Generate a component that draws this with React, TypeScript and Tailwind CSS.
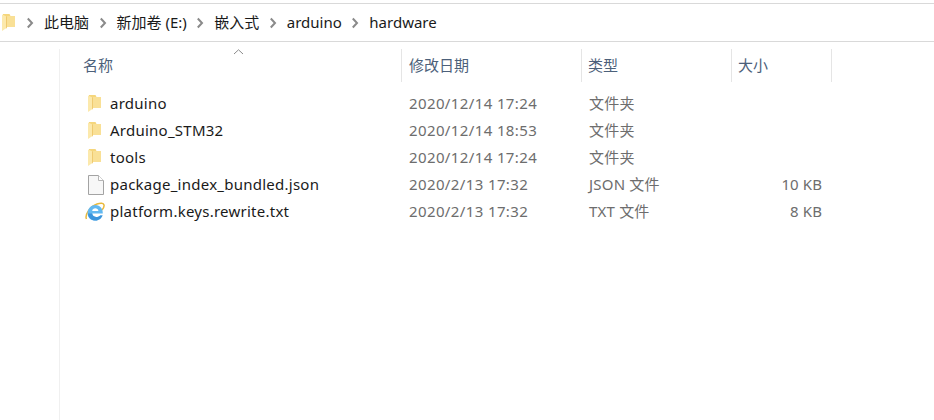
import React from "react";

const font = { fontFamily: '"Noto Sans", "Noto Sans CJK SC", sans-serif' };

const crumbs = ["此电脑", "新加卷 (E:)", "嵌入式", "arduino", "hardware"];

type Row = { name: string; date: string; type: string; size?: string; icon: "folder" | "file" | "ie" };

const rows: Row[] = [
  { name: "arduino", date: "2020/12/14 17:24", type: "文件夹", icon: "folder" },
  { name: "Arduino_STM32", date: "2020/12/14 18:53", type: "文件夹", icon: "folder" },
  { name: "tools", date: "2020/12/14 17:24", type: "文件夹", icon: "folder" },
  { name: "package_index_bundled.json", date: "2020/2/13 17:32", type: "JSON 文件", size: "10 KB", icon: "file" },
  { name: "platform.keys.rewrite.txt", date: "2020/2/13 17:32", type: "TXT 文件", size: "8 KB", icon: "ie" },
];

function FolderIcon({ className }: { className?: string }) {
  return (
    <svg viewBox="0 0 13 17" className={className}>
      <path d="M1 0 H7.5 L8.5 2 H13 V13 H1 Z" fill="#f5d67c" />
      <path d="M4.5 2 H13 V13 H4.5 Z" fill="#f9e096" />
      <path d="M0 0.5 L4.5 2.5 V14 L0 17 Z" fill="#fce9ac" />
      <path d="M4 2.3 L4.8 2.5 V14 L4 14.5 Z" fill="#ecc566" />
    </svg>
  );
}

function FileIcon() {
  return (
    <svg viewBox="0 0 16 20" className="h-5 w-4">
      <path d="M0.5 0.5 H10.5 L15.5 5.5 V19.5 H0.5 Z" fill="#f7f7f7" stroke="#a3a3a3" />
      <path d="M10.5 0.5 V5.5 H15.5" fill="#ffffff" stroke="#b5b5b5" />
    </svg>
  );
}

function IeIcon() {
  return (
    <svg viewBox="0 0 20 20" className="h-5 w-5">
      <path
        d="M1.5 17 C-0.5 13 5 4.5 12 2 C15.5 0.8 18.5 0.8 19 3 C19.4 4.6 18.4 6.3 17 8"
        fill="none"
        stroke="#e9b93c"
        strokeWidth="1.5"
      />
      <path
        d="M2.6 11 C2.6 6.4 6.2 3 10.6 3 C15 3 18 6.6 17.8 11.6 H7.2 C7.4 15.2 12.2 16 15.2 13.4 H17.6 C15.8 17.4 12.4 18.6 10 18.6 C5.8 18.6 2.6 15.6 2.6 11 Z M7.2 9 H13.4 C13.2 5.4 7.4 5.4 7.2 9 Z"
        fill="#62b8f0"
        fillRule="evenodd"
      />
      <path d="M3.4 14 C5 17.4 8 18.6 10 18.6 C12.4 18.6 15.8 17.4 17.6 13.4 H15.2 C12.4 16 7.4 15.4 7.2 11.6 H3 Z" fill="#3a94dc" />
    </svg>
  );
}

function Chevron() {
  return (
    <svg viewBox="0 0 8 12" className="h-3 w-2 shrink-0">
      <path d="M1.8 1.5 L6 6 L1.8 10.5" fill="none" stroke="#8a8a8a" strokeWidth="2" />
    </svg>
  );
}

export default function App() {
  return (
    <div className="h-[420px] w-[934px] overflow-hidden bg-white text-[15px]" style={font}>
      {/* Address bar */}
      <div className="mt-[3px] flex h-[39px] items-center border-y border-[#d9d9d9] text-[#1a1a1a]">
        <FolderIcon className="ml-[2px] h-[17px] w-[13px]" />
        <div className="ml-[11px] flex items-center">
          {crumbs.map((crumb, i) => (
            <div key={crumb} className="flex items-center">
              <Chevron />
              <span className={i === crumbs.length - 1 ? "ml-[10px]" : "ml-[10px] mr-[9.5px]"}>{crumb}</span>
            </div>
          ))}
        </div>
      </div>

      {/* File list */}
      <div className="ml-[59px] mt-[7px] h-[371px] border-l border-[#f0f0f0]">
        <div className="relative flex h-[33px] items-center text-[#4c607a]">
          <svg viewBox="0 0 10 6" className="absolute left-[173px] top-0 h-[6px] w-[11px]">
            <path d="M0.5 5 L5 0.8 L9.5 5" fill="none" stroke="#8a8a8a" />
          </svg>
          <div className="w-[341px] pl-[23px]">名称</div>
          <div className="h-full w-[180px] border-l border-[#e5e5e5] pl-[7px] leading-[33px]">修改日期</div>
          <div className="h-full w-[150px] border-l border-[#e5e5e5] pl-[6px] leading-[33px]">类型</div>
          <div className="h-full w-[101px] border-x border-[#e5e5e5] pl-[6px] leading-[33px]">大小</div>
        </div>
        <div className="mt-[8px] flex flex-col">
          {rows.map((row) => (
            <div key={row.name} className="flex h-[27px] items-center text-[#6d6d6d]">
              <div className="flex w-[341px] items-center">
                <div className="ml-[25px] flex w-[25px] justify-start">
                  {row.icon === "folder" && <FolderIcon className="ml-[3px] h-[17px] w-[13px]" />}
                  {row.icon === "file" && <div className="ml-[3px] flex"><FileIcon /></div>}
                  {row.icon === "ie" && <IeIcon />}
                </div>
                <span className="tracking-[0.25px] text-[#1a1a1a]">{row.name}</span>
              </div>
              <div className="w-[180px] pl-[8px] tracking-[0.38px]">{row.date}</div>
              <div className="w-[150px] pl-[8px] tracking-[0.2px]">{row.type}</div>
              <div className="w-[91px] text-right tracking-[0.1px]">{row.size}</div>
            </div>
          ))}
        </div>
      </div>
    </div>
  );
}
